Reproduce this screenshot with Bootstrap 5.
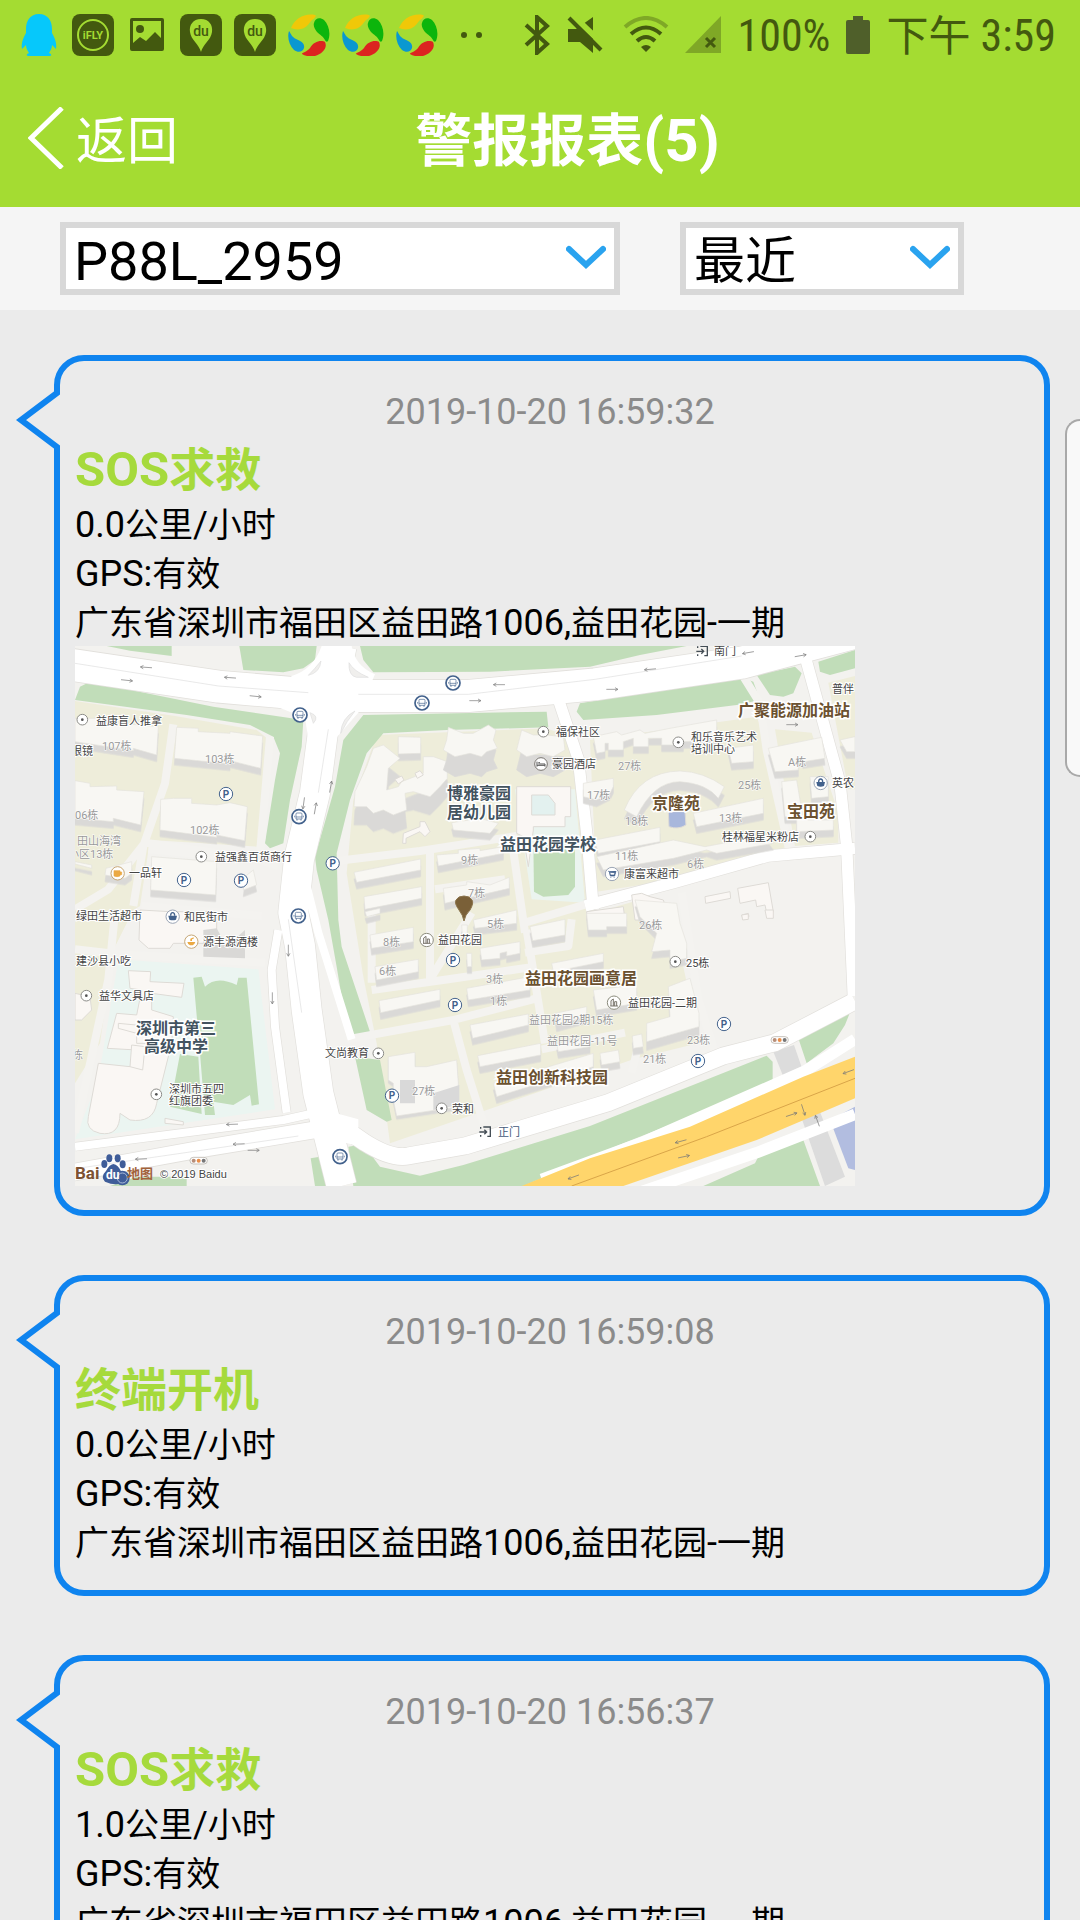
<!DOCTYPE html>
<html lang="zh-CN">
<head>
<meta charset="utf-8">
<meta name="viewport" content="width=device-width, initial-scale=1">
<title>警报报表</title>
<link href="https://cdn.jsdelivr.net/npm/bootstrap@5.3.0/dist/css/bootstrap.min.css" rel="stylesheet">
<style>
  :root { --lime: #a4dc32; --ink: #43590f; --line: #0f84ef; }
  body { background: #ebebeb; color: #000; font-family: Roboto, "Noto Sans CJK SC", sans-serif; }
  .topzone { background: var(--lime); }
  .statusbar { height: 70px; padding: 0 24px 0 18px; color: var(--ink); }
  .statusbar .tray { gap: 12px; }
  .statusbar .readout { font-family: "Roboto Condensed", Roboto, "Noto Sans CJK SC", sans-serif; font-size: 44px; line-height: 52px; padding-top: 2px; }
  .statusbar .clock-cjk { font-size: 42px; }
  .titlebar { height: 137px; padding: 7px 120px 0 28px; color: #fff; }
  .titlebar .back { width: 147px; gap: 12px; font-size: 51px; line-height: 64px; color: #fff; }
  .titlebar h1 { font-size: 57px; line-height: 72px; font-weight: 700; }
  .titlebar h1 .latin { font-size: 60px; line-height: 1; }
  .filters { background: #f5f5f5; padding: 15px 60px; gap: 60px; height: 103px; }
  .picker { border: 6px solid #d8d8d8; background: #fff; height: 73px; }
  .picker-device { width: 560px; }
  .picker-range { width: 284px; }
  .picker select { appearance: none; border: 0; background: transparent; color: #000; width: 100%; height: 61px; padding: 6px 60px 0 8px; line-height: 55px; }
  .picker-device select { font-size: 54px; }
  .picker-range select { font-size: 51px; }
  .picker svg { position: absolute; right: 8px; top: 17px; pointer-events: none; }
  .feed { padding: 45px 30px 60px 54px; gap: 59px; overflow-y: auto; scrollbar-width: none; }
  .feed::-webkit-scrollbar { display: none; }
  .bubble { border: 6px solid var(--line); border-radius: 30px; padding: 24px 19px 22px 15px; }
  .bubble .tail { position: absolute; left: -46px; top: 26px; }
  .bubble time { font-size: 36px; line-height: 54px; color: #8b8b8b; }
  .bubble h2 { font-size: 46px; line-height: 62px; font-weight: 700; color: #a6da3c; }
  .bubble h2 .latin { font-size: 49px; line-height: 1; }
  .bubble p { font-size: 34px; line-height: 49px; }
  .bubble p .latin { font-size: 36px; line-height: 1; }
  .bubble .mapview { width: 780px; max-width: 100%; height: auto; margin: -2px 0 2px; }
  .edge-handle { position: fixed; right: 0; top: 419px; width: 15px; height: 358px; border: 2px solid #a9a9a9; border-right: 0; border-radius: 18px 0 0 18px; background: #f9f9f9; }
  .land { fill: #eeedda; }
  .green { fill: #c1ddb9; }
  .lane { fill: none; stroke: #f4f3f0; stroke-width: 24; stroke-linejoin: round; }
  .edge { fill: none; stroke: #e2e0dc; stroke-linejoin: round; }
  .road { fill: none; stroke: #fff; stroke-linejoin: round; }
  .seam { fill: none; stroke: #dedede; stroke-width: 2; }
  .bld path { fill: #f8f7f3; stroke: #e4e2dd; stroke-width: 2; filter: drop-shadow(0 20px 0 #dad9d7); }
  .flat path { fill: #faf7f4; stroke: #dedbd6; stroke-width: 3; }
  .poi { font-size: 11px; fill: #444; stroke: #fff; stroke-width: 2px; paint-order: stroke; }
  .num { font-size: 11px; fill: #999; stroke: #fff; stroke-width: 1px; paint-order: stroke; }
  .area { font-size: 16px; font-weight: 700; fill: #6b5130; stroke: #fff; stroke-width: 3px; paint-order: stroke; }
  .school { fill: #43535f; }
</style>
<script src="https://cdn.jsdelivr.net/npm/bootstrap@5.3.0/dist/js/bootstrap.bundle.min.js"></script>
</head>
<body>
<svg width="0" height="0" class="position-absolute" aria-hidden="true">
  <defs>
    <symbol id="i-du" viewBox="0 0 42 42"><rect width="42" height="42" rx="8" fill="#43590f"/><path d="M21 5C13 5 9 11 10 18c1 8 9 12 11 20 2-8 10-12 11-20C33 11 29 5 21 5Z" fill="#a4dc32"/><text x="21" y="22" font-size="14" text-anchor="middle" fill="#43590f" font-family="Roboto" font-weight="500">du</text></symbol>
    <symbol id="i-swirl" viewBox="0 0 42 42"><path d="M3 14C7 4 17-1 27 1c2 1 0 3-3 5-3 3-5 8-11 9-4 1-7 0-10-1Z" fill="#f0c808"/><path d="M26 9c1-5 6-6 10-3 5 5 7 14 4 21-1 1-2 1-3-1-2-4-5-5-8-8-2-3-4-6-3-9Z" fill="#0cb50c"/><path d="M37 28c3 6-3 12-10 14-5 1-10 0-13-2-1-1 5-2 8-6 3-5 7-7 11-7 2 0 3 0 4 1Z" fill="#dc2420"/><path d="M1 17c-2 6 0 14 5 19 4 3 9 2 10-2 1-5-3-7-8-9-4-2-5-5-7-8Z" fill="#0a98d0"/></symbol>
    <symbol id="i-tail" viewBox="0 0 46 66"><path d="M43 5v56" stroke="#ebebeb" stroke-width="7"/><path d="M43 1v5L7 33l36 27v5" fill="#ebebeb" stroke="#0f84ef" stroke-width="6"/></symbol>
    <symbol id="i-chev" viewBox="0 0 40 26"><path d="M3 4l17 16L37 4" fill="none" stroke="#2aa3ef" stroke-width="6" stroke-linecap="round"/></symbol>
    <g id="m-p"><circle r="20" fill="#fff" stroke="#42618c" stroke-width="3"/><text y="11" text-anchor="middle" font-size="30" font-weight="700" fill="#42618c" font-family="Roboto">P</text></g>
    <g id="m-bus"><circle r="21" fill="#fff" stroke="#42618c" stroke-width="5"/><path d="M-9-8q0-3 3-3H6q3 0 3 3V7H-9ZM-9 1H9M-6 7v5M6 7v5M-13-3V2M13-3V2" fill="none" stroke="#42618c" stroke-width="2"/></g>
    <g id="m-dot"><circle r="16" fill="#fff" stroke="#8c8c88" stroke-width="3"/><circle r="4" fill="#555"/></g>
    <g id="m-bag"><circle r="20" fill="#fff" stroke="#9aa4b4" stroke-width="3"/><path d="M-13-3H13L10 9Q0 13-10 9Z" fill="#42618c"/><path d="M-6-3q0-9 6-9t6 9" fill="none" stroke="#42618c" stroke-width="4"/></g>
    <g id="m-food"><circle r="20" fill="#fff" stroke="#c5a674" stroke-width="3"/><path d="M-11-8H7V8Q-2 12-11 8ZM7-4h5v8H7" fill="#eba943" stroke="#eba943" stroke-width="2"/></g>
    <g id="m-bowl"><circle r="20" fill="#fff" stroke="#c5a674" stroke-width="3"/><path d="M-12 1H12Q9 10 4 11H-4Q-10 10-12 1ZM-3-2V-9L7-13V-9L2-7V-2Z" fill="#eba943"/></g>
    <g id="m-bed"><circle r="19" fill="#fff" stroke="#77736e" stroke-width="3"/><path d="M-12-7V8M-12 4H12V8M-8 0H12V4M-8-4h5" fill="none" stroke="#555" stroke-width="3"/></g>
    <g id="m-tower"><circle r="20" fill="#fff" stroke="#8c8c7c" stroke-width="3"/><path d="M-9 10V-6l7-5V10M2 10V-3h6V10M-11 10H12" fill="none" stroke="#77736a" stroke-width="3"/></g>
    <g id="m-cart"><circle r="20" fill="#fff" stroke="#9aa4b4" stroke-width="3"/><path d="M-12-8h4l3 14H8l4-15M-7-5L9-4 7 3-5 3ZM-5 10h3M5 10h3" fill="#42618c" stroke="#42618c" stroke-width="2"/></g>
    <g id="m-gate"><path d="M-6-14H15V14H6M-18 1H4M-3-6l7 7-7 7M-14-14v5M-14 10v5" fill="none" stroke="#444d55" stroke-width="4"/></g>
    <g id="m-light"><rect x="-26" y="-10" width="52" height="20" rx="10" fill="#fff" stroke="#aaa49c" stroke-width="2"/><circle cx="-15" r="6" fill="#b78e79"/><circle r="6" fill="#e98e4a"/><circle cx="15" r="6" fill="#777"/></g>
    <g id="m-arr"><path d="M-18 0H16M8-5l9 5-9 5" fill="none" stroke="#777" stroke-width="2"/></g>
  </defs>
</svg>

<div class="vh-100 d-flex flex-column overflow-hidden">
  <header class="topzone flex-shrink-0">
    <div class="statusbar d-flex align-items-center justify-content-between">
      <div class="tray d-flex align-items-center">
        <svg width="42" height="42" viewBox="0 0 42 42" aria-label="QQ"><path d="M21 0C12 0 8 7 8 15v4C5 24 3 30 4 35l4-4c0 4 2 6 3 8-3 1-3 3 0 3h20c3 0 3-2 0-3 1-2 3-4 3-8l4 4c1-5-1-11-4-16v-4C34 7 30 0 21 0Z" fill="#06c8fb"/></svg>
        <svg width="42" height="42" viewBox="0 0 42 42"><rect width="42" height="42" rx="8" fill="#43590f"/><circle cx="21" cy="21" r="15" fill="none" stroke="#a4dc32" stroke-width="2"/><text x="21" y="25" font-size="11" font-weight="700" text-anchor="middle" fill="#a4dc32" font-family="Roboto">iFLY</text></svg>
        <svg width="42" height="42" viewBox="0 0 42 42"><path fill-rule="evenodd" d="M6 4H36q2 0 2 2V35q0 2-2 2H6q-2 0-2-2V6q0-2 2-2ZM7 7V29l7-6 6 4 9-9 6 6V7Z" fill="#43590f"/><circle cx="14" cy="15" r="4" fill="#43590f"/></svg>
        <svg width="42" height="42"><use href="#i-du"/></svg>
        <svg width="42" height="42"><use href="#i-du"/></svg>
        <svg width="42" height="42"><use href="#i-swirl"/></svg>
        <svg width="42" height="42"><use href="#i-swirl"/></svg>
        <svg width="42" height="42"><use href="#i-swirl"/></svg>
        <svg width="42" height="42" viewBox="0 0 42 42"><circle cx="14" cy="21" r="3" fill="#43590f"/><circle cx="29" cy="21" r="3" fill="#43590f"/></svg>
      </div>
      <div class="d-flex align-items-center gap-3">
        <svg width="28" height="40" viewBox="0 0 28 40"><path d="M3 10l21 19-10 9V2l10 9L3 30" fill="none" stroke="#43590f" stroke-width="4"/></svg>
        <svg width="36" height="38" viewBox="0 0 36 38"><path d="M1 13h8L26 1V37L13 26H1Z" fill="#43590f"/><path d="M3-3L38 30" stroke="#a4dc32" stroke-width="6"/><path d="M2 2L34 34" stroke="#43590f" stroke-width="4"/></svg>
        <svg width="46" height="38" viewBox="0 0 46 38" class="ms-1" fill="none" stroke="#43590f" stroke-width="4"><path d="M2 11Q23-7 44 11" stroke="#7fa826"/><path d="M8 18Q23 5 38 18M14 25q9-8 18 0"/><path d="M18 31q5-4 10 0l-5 5Z" fill="#43590f" stroke="none"/></svg>
        <svg width="36" height="38" viewBox="0 0 36 38"><path d="M36 0V37H0Z" fill="#7fa826"/><path d="M21 22l9 9M30 22l-9 9" stroke="#43590f" stroke-width="3"/></svg>
        <span class="readout">100%</span>
        <svg width="24" height="38" viewBox="0 0 24 38"><path d="M7 0H17V4h5q2 0 2 2V36q0 2-2 2H2q-2 0-2-2V6q0-2 2-2H7Z" fill="#4f5f2a"/></svg>
        <span class="readout"><span class="clock-cjk">下午</span> 3:59</span>
      </div>
    </div>
    <nav class="titlebar d-flex align-items-center">
      <a href="#" class="back d-flex align-items-center text-decoration-none text-nowrap">
        <svg width="36" height="62" viewBox="0 0 36 62" class="flex-shrink-0 mb-2"><path d="M34 1L3 31l31 30" fill="none" stroke="#fff" stroke-width="5"/></svg>返回</a>
      <h1 class="flex-fill text-center m-0">警报报表<span class="latin">(5)</span></h1>
    </nav>
  </header>

  <form class="filters d-flex flex-shrink-0">
    <div class="picker picker-device position-relative">
      <select aria-label="设备"><option>P88L_2959</option></select>
      <svg width="40" height="26"><use href="#i-chev"/></svg>
    </div>
    <div class="picker picker-range position-relative">
      <select aria-label="时间范围"><option>最近</option></select>
      <svg width="40" height="26"><use href="#i-chev"/></svg>
    </div>
  </form>

  <main class="feed flex-fill d-flex flex-column">
    <article class="bubble position-relative flex-shrink-0">
      <svg class="tail" width="46" height="66"><use href="#i-tail"/></svg>
      <time class="d-block text-center">2019-10-20 16:59:32</time>
      <h2 class="m-0"><span class="latin">SOS</span>求救</h2>
      <p class="m-0"><span class="latin">0.0</span>公里<span class="latin">/</span>小时</p>
      <p class="m-0"><span class="latin">GPS:</span>有效</p>
      <p class="m-0">广东省深圳市福田区益田路<span class="latin">1006,</span>益田花园<span class="latin">-</span>一期</p>
      <svg class="mapview d-block" viewBox="0 0 780 540" role="img" aria-label="地图">
        <rect width="780" height="540" fill="#f3f2ef"/>
        <g transform="scale(.33333)">
          <!-- estates and school grounds -->
          <path class="land" d="M0 165L300 210 545 252 595 292 575 422 545 602 225 582 195 780 175 792 115 912 75 1192 0 1312Z"/>
          <path class="land" d="M905 267L1415 247 1505 282 1560 800 1700 760 1800 850 1875 1190 1675 1240 1235 1392 945 1492 905 1192 865 992 815 682 835 462Z"/>
          <path class="land" d="M1545 282L2045 212 2085 312 2145 600 1795 702 1565 737ZM2100 250L2210 260 2290 500 2290 590 2160 600Z"/>
          <path class="land" d="M2260 110L2340 90V430L2320 430Z"/>
          <path d="M130 940L550 970 600 1390 0 1480 70 1300Z" fill="#ebf5f1"/>
          <path d="M1320 430L1500 430 1530 770 1370 760Z" fill="#ebf4ef"/>
          <path d="M400 20L300 0H500V60Z" fill="#f3f2ef"/>
          <!-- greens -->
          <g transform="translate(-15 -18)" class="green">
            <path d="M110 18H305V48L180 32ZM508 18H740L735 60 700 85 640 97 520 90ZM15 180L30 140 60 125 430 200 700 240 695 320 660 480 640 610 600 625 585 610 615 420 630 340 610 290 540 255 350 225Z"/>
          </g>
          <g transform="translate(765 -18)" class="green">
            <path d="M90 18H1070L930 45 780 80 480 95 130 97 100 60Z"/>
            <path d="M100 225L650 215 655 262 350 270 160 280 110 340 60 480 20 640 25 840 35 920 120 1175 55 1190 20 980 -5 840 -40 690 -45 650 15 440 40 300Z"/>
            <path d="M610 610H735V740L715 765 640 770 612 755Z"/>
          </g>
          <g transform="translate(1545 -18)" class="green">
            <path d="M-40 215L-30 190 250 145 450 110 490 125 510 180 440 195 200 225 -20 240ZM500 105L615 80 635 100 610 160 580 170 540 165ZM685 65L795 30V85L720 105 690 95Z"/>
          </g>
          <g transform="translate(-15 792)" class="green">
            <path d="M370 203L395 200 405 230Q440 195 500 225L505 203H530L567 583 545 587 540 555 490 585 430 575 435 615H405L390 430ZM330 432L385 440 395 612 300 590ZM722 745L750 740 775 828H735ZM120 828L200 800H350V828Z"/>
          </g>
          <g transform="translate(765 792)" class="green">
            <path d="M75 440L150 450 185 630 170 635 110 600ZM55 710L100 703 150 770 270 797 400 765 780 648 1310 437 1328 455V525L1210 570 880 700 580 828H70Z"/>
          </g>
          <g transform="translate(1545 792)" class="green">
            <path d="M625 385L785 295 765 345 730 400 650 460ZM340 828L495 760 520 710 630 662 690 828Z"/>
            <path d="M720 630L795 590V780L775 775Z" style="fill:#b2bde0"/>
            <path d="M550 425L612 405 638 480 585 512ZM635 625L690 605 765 800 705 828Z" style="fill:#dcdcdc"/>
          </g>
          <!-- estate lanes -->
          <g class="lane">
            <path d="M295 235L270 412 205 600 175 780M585 272L555 622M0 790L100 730 210 590 420 620M220 610L550 640 610 660M200 780L560 810M0 910L130 925 570 950M120 800L100 1000 0 1460"/>
            <path d="M785 645L1035 615 1325 570M1065 620V1010M890 1032L1120 1000 1380 962M815 1180L1135 1122 1385 1057M1065 1000L1190 800M1135 1122L1175 1272 1225 1430M1355 852L1410 1192M1310 580L1350 860M1080 730L1290 700M890 780V1010M1350 830L1550 770M1350 920L1480 900 1490 820"/>
            <path d="M2005 92L2055 172 2075 312 2145 622M1400 1210L1650 1160M1690 1200L1670 1280M1820 740L1870 1060 1920 1220"/>
          </g>
          <!-- main roads -->
          <g class="edge">
            <path stroke-width="101" d="M-20 55L430 122 760 150 1180 150 1560 115 2000 50 2340-40"/>
            <path stroke-width="94" d="M800 0L745 250 720 440 672 640 655 800 675 900 695 1092 730 1342 800 1620"/>
            <path stroke-width="28" d="M610 852L590 972 600 1142 635 1400M0 1502L625 1422 760 1392"/>
            <path stroke-width="55" d="M-10 1580L400 1505 730 1450"/>
            <path stroke-width="55" d="M740 1400L870 1490Q950 1540 1000 1530L1170 1500 1600 1370 1945 1230 2100 1190 2340 1065"/>
            <path stroke-width="38" d="M1450 160L1510 340 1535 560 1555 790M1530 780L1795 710 2080 630 2340 607M2190 30L2245 230 2295 412 2315 600 2335 1050"/>
          </g>
          <g class="road">
            <path stroke-width="96" d="M-20 55L430 122 760 150 1180 150 1560 115 2000 50 2340-40"/>
            <path stroke-width="90" d="M800 0L745 250 720 440 672 640 655 800 675 900 695 1092 730 1342 800 1620"/>
            <path stroke-width="24" d="M610 852L590 972 600 1142 635 1400M0 1502L625 1422 760 1392M690 700L730 860 830 1180"/>
            <path stroke-width="50" d="M-10 1580L400 1505 730 1450"/>
            <path stroke-width="51" d="M740 1400L870 1490Q950 1540 1000 1530L1170 1500 1600 1370 1945 1230 2100 1190 2340 1065"/>
            <path stroke-width="34" d="M1450 160L1510 340 1535 560 1555 790M1530 780L1795 710 2080 630 2340 607M2190 30L2245 230 2295 412 2315 600 2335 1050"/>
            <path stroke-width="34" d="M2340 1180L2190 1275 1700 1490 1400 1600M2340 1405L2045 1520 1690 1640"/>
            <path fill="#fff" stroke="none" d="M740 0H830Q840 60 900 85L850 200 780 280 700 280 690 215 600 180 650 90Q715 70 740 0ZM740 1390L850 1420 850 1500 770 1480Z"/>
          </g>
          <path class="seam" d="M0 52L430 120 700 140M850 145L1180 145 1560 100 2000 30M760 250L730 440M640 820L680 1100M0 1568L400 1510 670 1470M2340 1240L2185 1310"/>
          <path d="M700 88Q735 80 738 45 718 70 700 88ZM822 50Q835 75 880 94H845Q820 90 822 50ZM840 195Q800 215 797 262 815 225 840 195ZM705 200Q735 210 715 232Z" fill="#f0efed" stroke="#dedede" stroke-width="2"/>
          <path d="M1340 1620L1545 1537 1845 1442 2185 1292 2340 1232V1357L2045 1482 1645 1620Z" fill="#ffd56b"/>
          <path d="M1490 1620L1895 1472 2340 1297" fill="none" stroke="#d9a548" stroke-width="3"/>
          <!-- apartment blocks -->
          <g transform="translate(-15 -18)" class="bld">
            <path d="M15 235H95V245L265 260 260 345 190 325V332L15 305Z"/><path d="M320 262L385 265V275L480 280V275L578 288 572 385 480 362V372L313 355Z"/>
            <path d="M15 422L60 430V440L140 438V450L222 455 212 555 130 535V545L15 535Z"/><path d="M272 478L310 475H365V490L440 495 480 488 532 500 524 602 440 585V592L270 570Z"/>
            <path d="M15 665L65 675V685L15 672Z"/><path d="M108 685L185 665V700L165 715 105 705Z"/><path d="M245 650L440 665 437 765 242 750Z"/><path d="M525 710L550 690 560 735 520 750Z"/>
          </g>
          <g transform="translate(765 -18)" class="bld">
            <path d="M205 290L272 292V340L205 342Z"/>
            <path style="filter:drop-shadow(0 55px 0 #dad9d7)" d="M130 325L160 315 210 355 175 385 170 450 205 440 215 425 280 400V350L310 350 352 365V415L330 440 300 470 250 455 225 460 230 510 190 525 160 510 130 520 110 500 72 500 75 455 110 380Z"/>
            <path style="filter:drop-shadow(0 60px 0 #dad9d7)" d="M355 262L400 280H430L475 255 498 270 490 300 502 325 470 335 455 350 420 340 375 350 340 330 350 300Z"/>
            <path style="filter:drop-shadow(0 60px 0 #dad9d7)" d="M575 270L610 285H650L700 290 705 330 670 350 630 340 590 350 560 330Z"/>
            <path d="M365 548L450 535 505 550 480 580 370 570Z"/>
            <path d="M320 645L385 640V630L450 625V632L520 620V640L325 678Z"/>
            <path d="M72 697L272 657V690L80 727Z"/><path d="M102 770L275 740V775L105 808Z"/><path d="M340 745L410 735V725L480 735 538 712V745L345 790Z"/>
          </g>
          <g transform="translate(765 -18)" class="flat">
            <path d="M560 440H722V530H705V560H610V570L595 680 580 590 560 580Z"/><path d="M605 465H655L675 490V525H605Z" style="fill:#e3f1ef"/><path d="M220 580L270 560V545H285L300 575 285 590 270 575 228 595V610H218Z"/><path d="M195 418L215 408 222 420 205 432ZM255 400L270 392 280 405 262 415Z"/>
          </g>
          <g transform="translate(1545 -18)" class="bld">
            <path d="M10 290L80 275 95 285 150 270 165 280 240 265 380 240V300L280 305V315H215V295H175V320H130V295L100 305V330H55V310H45V335L20 340Z"/>
            <path d="M415 325L490 315V365L425 370Z"/><path d="M103 510Q150 395 270 393 340 395 403 440L385 475Q350 430 270 425 190 425 140 530Z" style="filter:drop-shadow(0 26px 0 #dad9d7)"/>
            <path d="M-20 430L70 415V440L60 460 20 480-20 470Z"/><path d="M310 520L520 475V520L320 560Z"/><path d="M15 600L210 562V605L25 640Z"/><path d="M20 650L250 600 345 620 530 585 550 610 380 640 350 630 250 655 40 690Z"/>
            <path d="M535 325L695 292 705 355 640 365 625 355V390L555 395Z"/><path d="M575 425L620 420 640 540H730V570L620 575V530H585Z"/><path d="M660 410H715V470L665 475Z"/><path d="M750 300L795 290V335L770 335Z"/>
          </g>
          <g transform="translate(1545 -18)" class="flat">
            <path d="M345 770L420 755 422 775 347 790ZM443 745L535 728 550 815 530 818 525 795 500 800 497 780 450 790ZM455 825L475 820 477 830 458 835ZM-10 815L100 800 105 840H-10ZM125 765L155 760 180 770 220 780 240 840H135Z"/>
            <path d="M235 515L285 515 288 555Q265 570 237 560Z" style="fill:#a8b7dc"/>
          </g>
          <g transform="translate(-15 792)" class="flat">
            <path d="M210 0L300 5H440V100H310L300 115H235L207 90Z"/><path d="M175 182L242 185 240 215 342 220 335 262 245 250V300L310 320 305 400 260 580Q250 640 180 630L150 610Q150 680 90 670 45 660 55 620L85 460 180 470 200 420 112 415 140 310 200 315 215 240 180 235Z"/><path d="M145 340L250 350 245 400 200 400V370L145 355ZM185 405L225 410 218 480 180 470ZM285 625L340 635V645L285 640ZM15 250L60 260 65 300 35 330 15 330Z"/>
          </g>
          <g transform="translate(-15 792)"><path d="M400 60L440 55 470 110 525 60V145L400 140Z" fill="#d9d8d6"/></g>
          <g transform="translate(765 792)" class="bld">
            <path d="M105 5L150-5V10L110 20Z"/><path d="M120 75L250 52V95L125 115Z"/><path d="M135 170L265 148V185L140 210Z"/><path d="M147 272L330 238V270L152 308Z"/>
            <path d="M430 30L560 0V40L435 55Z"/><path d="M450 115L570 95V130L530 138V125L510 130V145L455 150Z"/><path d="M410 130H425V170H412ZM395 45H412V75H397Z"/><path d="M410 235L600 200V240L415 270Z"/><path d="M420 345L595 312V345L428 385Z"/><path d="M443 437L632 400V435L450 470Z"/>
            <path d="M600 50L705 28V75L608 92Z"/><path d="M770 10H890V50H830V60H775Z"/><path d="M665 160L820 130V155L670 185Z"/><path d="M675 310L770 290V320L680 345ZM680 400L780 380V410L685 425Z"/><path d="M790 240L920 225V280L800 300Z"/>
            <path d="M175 440L255 427V470H290L380 450 385 520V590L200 618 190 570V520L175 510Z" style="filter:drop-shadow(0 10px 0 #dad9d7)"/><path d="M490 520L790 430V470L500 560Z"/>
          </g>
          <g transform="translate(765 792)"><path d="M210 510H255V580H210ZM310 550L388 525V585L310 600Z" fill="#d9d9d9"/></g>
          <g transform="translate(1545 792)" class="bld">
            <path d="M135-30L260-20 270 40 290 100V145L240 155V120L185 125 200 70 150 20Z"/><path d="M235 230L300 205 327 310V350L170 395V340L240 320Z" style="filter:drop-shadow(0 26px 0 #dad9d7)"/><path d="M127 378L155 372 160 410 130 415ZM30 430L85 420 90 455 35 465Z"/>
          </g>
          <g transform="translate(1545 792)" class="flat"><path d="M455 15L475 12V28L458 30ZM525 0H550V25H530Z"/></g>
          <!-- symbols -->
          <g transform="translate(-15 -18)">
            <use href="#m-dot" x="37" y="239"/><use href="#m-dot" x="394" y="650"/><use href="#m-p" x="468" y="462"/><use href="#m-p" x="342" y="720"/><use href="#m-p" x="513" y="722"/><use href="#m-p" x="788" y="670"/>
            <use href="#m-bus" x="690" y="225"/><use href="#m-bus" x="687" y="530"/><use href="#m-bus" x="685" y="828"/><use href="#m-food" x="143" y="700"/><use href="#m-bag" x="308" y="830"/>
            <use href="#m-arr" transform="translate(228 82) rotate(184)"/><use href="#m-arr" transform="translate(480 113) rotate(184)"/><use href="#m-arr" transform="translate(171 121) rotate(6)"/><use href="#m-arr" transform="translate(557 169) rotate(6)"/>
            <use href="#m-arr" transform="translate(782 440) rotate(-80)"/><use href="#m-arr" transform="translate(736 505) rotate(-80)"/><use href="#m-arr" transform="translate(701 490) rotate(98)"/>
          </g>
          <g transform="translate(765 -18)">
            <use href="#m-bus" x="369" y="129"/><use href="#m-bus" x="276" y="189"/><use href="#m-dot" x="640" y="275"/><use href="#m-bed" x="633" y="372"/>
            <use href="#m-arr" transform="translate(507 134) rotate(180)"/><use href="#m-arr" x="436" y="182"/>
          </g>
          <g transform="translate(1545 -18)">
            <use href="#m-gate" x="337" y="33"/><use href="#m-dot" x="265" y="307"/><use href="#m-dot" x="661" y="590"/><use href="#m-bag" x="692" y="429"/><use href="#m-cart" x="66" y="702"/>
            <use href="#m-arr" transform="translate(474 38) rotate(170)"/><use href="#m-arr" transform="translate(632 47) rotate(-10)"/><use href="#m-arr" transform="translate(180 88) rotate(175)"/><use href="#m-arr" x="67" y="148"/><use href="#m-arr" x="607" y="254"/>
          </g>
          <g transform="translate(-15 792)">
            <use href="#m-bowl" x="364" y="95"/><use href="#m-dot" x="49" y="257"/><use href="#m-dot" x="259" y="553"/><use href="#m-light" x="386" y="752"/>
            <use href="#m-arr" transform="translate(655 122) rotate(90)"/><use href="#m-arr" transform="translate(607 265) rotate(90)"/><use href="#m-arr" transform="translate(486 643) rotate(178)"/><use href="#m-arr" transform="translate(506 702) rotate(178)"/><use href="#m-arr" x="551" y="721"/><use href="#m-arr" transform="translate(213 747) rotate(178)"/>
            <g fill="#3f5d99"><ellipse cx="103" cy="762" rx="9" ry="12"/><ellipse cx="118" cy="745" rx="9" ry="12"/><ellipse cx="143" cy="745" rx="9" ry="12"/><ellipse cx="158" cy="763" rx="9" ry="12"/><path d="M130 762Q145 765 152 782 175 800 165 815 140 830 105 815 90 800 108 783 118 764 130 762Z"/><circle cx="157" cy="804" r="22"/></g>
            <circle cx="157" cy="804" r="15" fill="none" stroke="#a9bad9" stroke-width="3"/>
          </g>
          <g transform="translate(765 792)">
            <use href="#m-tower" x="290" y="90"/><use href="#m-p" x="369" y="150"/><use href="#m-p" x="375" y="285"/><use href="#m-p" x="186" y="557"/><use href="#m-dot" x="145" y="430"/><use href="#m-dot" x="335" y="595"/><use href="#m-gate" x="466" y="665"/><use href="#m-bus" x="30" y="740"/><use href="#m-arr" transform="translate(730 801) rotate(160)"/>
          </g>
          <g transform="translate(1545 792)">
            <use href="#m-dot" x="256" y="155"/><use href="#m-tower" x="72" y="278"/><use href="#m-p" x="402" y="342"/><use href="#m-p" x="324" y="453"/><use href="#m-light" x="569" y="390"/>
            <use href="#m-arr" transform="translate(775 485) rotate(160)"/><use href="#m-arr" transform="translate(605 614) rotate(-18)"/><use href="#m-arr" transform="translate(640 600) rotate(72)"/><use href="#m-arr" transform="translate(682 632) rotate(-110)"/><use href="#m-arr" transform="translate(272 694) rotate(165)"/><use href="#m-arr" transform="translate(282 740) rotate(-12)"/>
          </g>
        </g>
        <g class="num">
          <text x="27" y="104">107栋</text><text x="130" y="117">103栋</text><text x="0" y="173">06栋</text><text x="115" y="188">102栋</text><text x="2" y="199">田山海湾</text><text x="-7" y="212">小区13栋</text><text x="-3" y="413">栋</text>
          <text x="386" y="218">9栋</text><text x="393" y="251">7栋</text><text x="412" y="282">5栋</text><text x="308" y="300">8栋</text><text x="304" y="329">6栋</text><text x="411" y="337">3栋</text><text x="415" y="359">1栋</text><text x="454" y="378">益田花园2期15栋</text><text x="472" y="399">益田花园-11号</text><text x="337" y="449">27栋</text>
          <text x="543" y="124">27栋</text><text x="713" y="120">A栋</text><text x="663" y="143">25栋</text><text x="512" y="153">17栋</text><text x="550" y="179">18栋</text><text x="644" y="176">13栋</text><text x="540" y="214">11栋</text><text x="612" y="222">6栋</text><text x="564" y="283">26栋</text><text x="612" y="398">23栋</text><text x="568" y="417">21栋</text>
        </g>
        <g class="poi">
          <text x="21" y="79">益康盲人推拿</text><text x="-4" y="109">眼镜</text><text x="140" y="215">益强鑫百货商行</text><text x="54" y="231">一品轩</text><text x="1" y="274">绿田生活超市</text><text x="109" y="275">和民街市</text><text x="128" y="300">源丰源酒楼</text><text x="1" y="319">建沙县小吃</text><text x="24" y="354">益华文具店</text><text x="94" y="447">深圳市五四</text><text x="94" y="459">红旗团委</text><text x="250" y="411">文尚教育</text>
          <text x="481" y="90">福保社区</text><text x="477" y="122">豪园酒店</text><text x="363" y="298">益田花园</text><text x="377" y="467">荣和</text><text x="423" y="490" fill="#44597a">正门</text><text x="639" y="9">南门</text><text x="757" y="47">普伴</text><text x="616" y="95">和乐音乐艺术</text><text x="616" y="107">培训中心</text><text x="757" y="141">英农</text><text x="647" y="195">桂林福星米粉店</text><text x="549" y="232">康富来超市</text><text x="611" y="321">25栋</text><text x="553" y="361">益田花园-二期</text>
          <text x="85" y="532" font-family="Liberation Sans">© 2019 Baidu</text>
        </g>
        <g class="area">
          <text x="663" y="70">广聚能源加油站</text><text x="577" y="163">京隆苑</text><text x="712" y="171">宝田苑</text><text x="450" y="338">益田花园画意居</text><text x="421" y="437">益田创新科技园</text>
          <g class="school"><text x="372" y="153">博雅豪园</text><text x="372" y="172">居幼儿园</text><text x="425" y="204">益田花园学校</text><text x="61" y="388">深圳市第三</text><text x="69" y="406">高级中学</text></g>
        </g>
        <g font-weight="700" font-family="Roboto, Noto Sans CJK SC">
          <text x="0" y="533" font-size="17" fill="#7d5233">Bai</text><text x="31" y="533" font-size="12" fill="#fff">du</text><text x="52" y="532" font-size="13" fill="#a2623b">地图</text>
        </g>
        <path d="M389 275Q388 269 384 264 379 257 381 254 383 250 389 250 395 250 397 254 399 257 395 264 390 269 389 275Z" fill="#7a6038" stroke="#8c754e"/>
      </svg>
    </article>

    <article class="bubble position-relative flex-shrink-0">
      <svg class="tail" width="46" height="66"><use href="#i-tail"/></svg>
      <time class="d-block text-center">2019-10-20 16:59:08</time>
      <h2 class="m-0">终端开机</h2>
      <p class="m-0"><span class="latin">0.0</span>公里<span class="latin">/</span>小时</p>
      <p class="m-0"><span class="latin">GPS:</span>有效</p>
      <p class="m-0">广东省深圳市福田区益田路<span class="latin">1006,</span>益田花园<span class="latin">-</span>一期</p>
    </article>

    <article class="bubble position-relative flex-shrink-0">
      <svg class="tail" width="46" height="66"><use href="#i-tail"/></svg>
      <time class="d-block text-center">2019-10-20 16:56:37</time>
      <h2 class="m-0"><span class="latin">SOS</span>求救</h2>
      <p class="m-0"><span class="latin">1.0</span>公里<span class="latin">/</span>小时</p>
      <p class="m-0"><span class="latin">GPS:</span>有效</p>
      <p class="m-0">广东省深圳市福田区益田路<span class="latin">1006,</span>益田花园<span class="latin">-</span>一期</p>
    </article>
  </main>
</div>
<div class="edge-handle" aria-hidden="true"></div>
</body>
</html>
